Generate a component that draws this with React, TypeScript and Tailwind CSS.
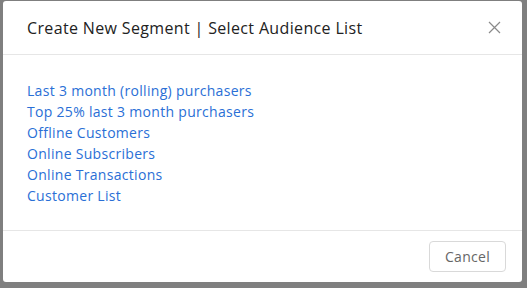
const links = [
  "Last 3 month (rolling) purchasers",
  "Top 25% last 3 month purchasers",
  "Offline Customers",
  "Online Subscribers",
  "Online Transactions",
  "Customer List",
];

export default function App() {
  return (
    <div className="w-[527px] h-[288px] bg-[#7f7f7f] pt-[1px] pl-[3px] overflow-hidden font-['Open_Sans',sans-serif]">
      <div className="w-[519px] h-[281px] bg-white rounded-[3px] flex flex-col">
        {/* Header */}
        <div className="h-[54px] flex items-center justify-between pl-[24px] pr-[21px] border-b border-[#e6e6e6]">
          <h2 className="text-[16px] text-[#222] tracking-[0.35px]">Create New Segment | Select Audience List</h2>
          <button className="text-[#8a8a8a]">
            <svg width="13" height="13" viewBox="0 0 13 13" fill="none" stroke="currentColor" strokeWidth="1.2">
              <path d="M1 1L12 12M12 1L1 12" />
            </svg>
          </button>
        </div>

        {/* Body */}
        <div className="flex-1 flex flex-col px-[24px] pt-[25px] border-b border-[#e6e6e6]">
          {links.map((l) => (
            <a key={l} href="#" className="text-[14px] leading-[21px] text-[#2a6fd6] tracking-[0.3px] w-fit">
              {l}
            </a>
          ))}
        </div>

        {/* Footer */}
        <div className="h-[51px] flex items-center justify-end pr-[16px]">
          <button className="h-[31px] w-[77px] rounded-[4px] border border-[#d9d9d9] text-[14px] text-[#666] tracking-[0.3px]">
            Cancel
          </button>
        </div>
      </div>
    </div>
  );
}
